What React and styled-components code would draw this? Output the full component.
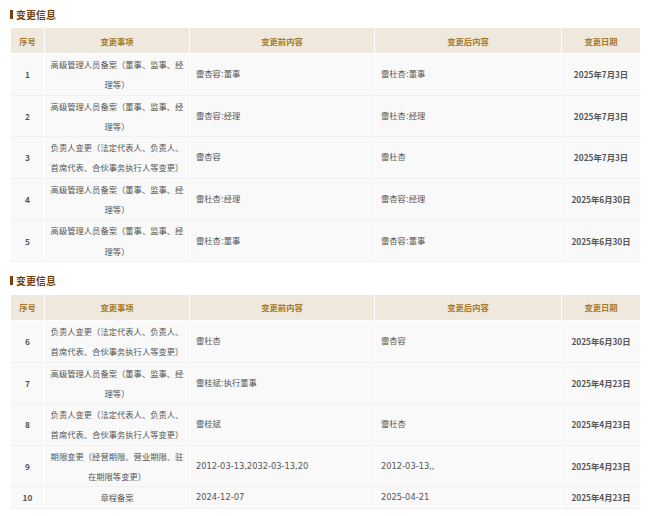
import React from 'react'
import styled, { createGlobalStyle } from 'styled-components'

const GlobalStyle = createGlobalStyle`
  body {
    margin: 0;
    background: #fff;
    font-family: "Noto Sans CJK SC", "Noto Sans", sans-serif;
  }
`;

const firstTable = [
  { no: 1, item: '高级管理人员备案（董事、监事、经理等）', before: '雷杏容:董事', after: '雷杜杏:董事', date: '2025年7月3日' },
  { no: 2, item: '高级管理人员备案（董事、监事、经理等）', before: '雷杏容:经理', after: '雷杜杏:经理', date: '2025年7月3日' },
  { no: 3, item: '负责人变更（法定代表人、负责人、首席代表、合伙事务执行人等变更）', before: '雷杏容', after: '雷杜杏', date: '2025年7月3日' },
  { no: 4, item: '高级管理人员备案（董事、监事、经理等）', before: '雷杜杏:经理', after: '雷杏容:经理', date: '2025年6月30日' },
  { no: 5, item: '高级管理人员备案（董事、监事、经理等）', before: '雷杜杏:董事', after: '雷杏容:董事', date: '2025年6月30日' },
];

const secondTable = [
  { no: 6, item: '负责人变更（法定代表人、负责人、首席代表、合伙事务执行人等变更）', before: '雷杜杏', after: '雷杏容', date: '2025年6月30日' },
  { no: 7, item: '高级管理人员备案（董事、监事、经理等）', before: '雷桂斌:执行董事', after: '', date: '2025年4月23日' },
  { no: 8, item: '负责人变更（法定代表人、负责人、首席代表、合伙事务执行人等变更）', before: '雷桂斌', after: '雷杜杏', date: '2025年4月23日' },
  { no: 9, item: '期限变更（经营期限、营业期限、驻在期限等变更）', before: '2012-03-13,2032-03-13,20', after: '2012-03-13,,', date: '2025年4月23日' },
  { no: 10, item: '章程备案', before: '2024-12-07', after: '2025-04-21', date: '2025年4月23日' },
];

function ChangeTable({ rows }) {
  return (
    <Section>
      <Title>变更信息</Title>
      <Table>
        <colgroup>
          <col style={{ width: 34 }} />
          <col style={{ width: 145 }} />
          <col style={{ width: 185 }} />
          <col style={{ width: 187 }} />
          <col style={{ width: 79 }} />
        </colgroup>
        <thead>
          <tr>
            <Th>序号</Th>
            <Th>变更事项</Th>
            <Th>变更前内容</Th>
            <Th>变更后内容</Th>
            <Th>变更日期</Th>
          </tr>
        </thead>
        <tbody>
          {rows.map((row) => (
            <tr key={row.no}>
              <Td $center $strong>{row.no}</Td>
              <Td $center $tight>{row.item}</Td>
              <Td $wide>{row.before}</Td>
              <Td $wide>{row.after}</Td>
              <Td $center $strong>{row.date}</Td>
            </tr>
          ))}
        </tbody>
      </Table>
    </Section>
  );
}

export default function App() {
  return (
    <Page>
      <GlobalStyle />
      <ChangeTable rows={firstTable} />
      <ChangeTable rows={secondTable} />
    </Page>
  );
}

const Page = styled.div`
  padding: 6px 10px 0 10px;
  width: 630px;
`;

const Section = styled.section`
  & + & {
    margin-top: 11px;
  }
`;

const Title = styled.div`
  display: flex;
  align-items: center;
  height: 16px;
  margin-bottom: 5px;
  font-size: 10px;
  font-weight: 700;
  color: #7a3f0c;

  &::before {
    content: '';
    width: 3px;
    height: 9px;
    margin-right: 3px;
    background: #7a3f0c;
  }
`;

const Table = styled.table`
  width: 630px;
  table-layout: fixed;
  border-collapse: collapse;
  font-size: 8.3px;
`;

const Th = styled.th`
  height: 25px;
  padding: 0 4px;
  background: #efe8dc;
  color: #a57a2c;
  font-weight: 600;
  text-align: center;
  border: 1px solid #fff;
`;

const Td = styled.td`
  padding: ${(p) => (p.$tight ? '0 3px' : '0 6px')};
  line-height: 20.3px;
  background: #f9f9f9;
  color: #555;
  font-family: ${(p) => (p.$wide ? '"DejaVu Sans", "Noto Sans CJK SC", sans-serif' : 'inherit')};
  font-weight: ${(p) => (p.$strong ? 600 : 400)};
  text-align: ${(p) => (p.$center ? 'center' : 'left')};
  border: 1px solid #fff;
  border-bottom-color: #f1f1f1;
  word-break: break-all;
`;
